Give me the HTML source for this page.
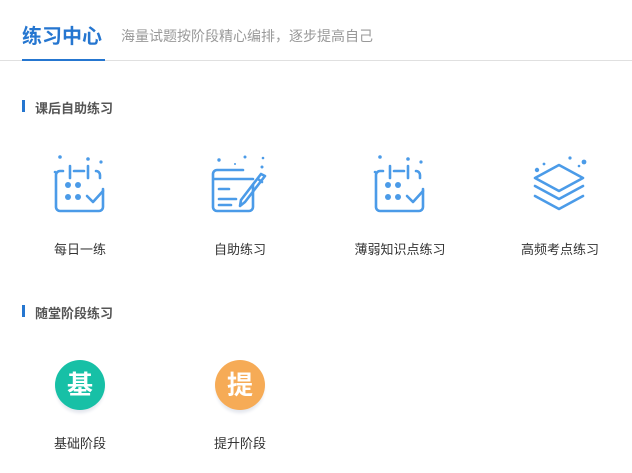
<!DOCTYPE html>
<html><head><meta charset="utf-8"><style>
body{margin:0;width:632px;height:473px;background:#fff;font-family:"Liberation Sans","Noto Sans CJK SC",sans-serif;position:relative;overflow:hidden}
.a{position:absolute;white-space:nowrap}
.lab{position:absolute;font-size:13px;color:#333;text-align:center;width:160px}
.c{position:absolute;width:50px;height:50px;border-radius:50%;color:#fff;font-size:26px;font-weight:bold;line-height:50px;text-align:center;box-shadow:0 4px 3px -1px #e4e7ee}
</style></head><body>
<div class="a" style="left:22px;top:20px;font-size:20px;font-weight:bold;color:#2576d0">练习中心</div>
<div class="a" style="left:121px;top:26px;font-size:14px;color:#999">海量试题按阶段精心编排，逐步提高自己</div>
<div class="a" style="left:0;top:60px;width:632px;height:1px;background:#e0e0e0"></div>
<div class="a" style="left:22px;top:59px;width:83px;height:2px;background:#2576d0"></div>

<div class="a" style="left:22px;top:100px;width:3px;height:12px;background:#2576d0"></div>
<div class="a" style="left:35px;top:98px;font-size:13px;font-weight:bold;color:#555">课后自助练习</div>
<div class="a" style="left:22px;top:305px;width:3px;height:12px;background:#2576d0"></div>
<div class="a" style="left:35px;top:303px;font-size:13px;font-weight:bold;color:#555">随堂阶段练习</div>

<svg class="a" style="left:0;top:0" width="632" height="473" fill="none" stroke="#4b9be8" stroke-width="2.6" stroke-linecap="round" stroke-linejoin="round">
<g id="cal">
<path d="M63 171h-3a4 4 0 0 0-4 4v32a4 4 0 0 0 4 4h39a4 4 0 0 0 4-4v-18M96 171a4 4 0 0 1 4 4v3"/>
<path d="M70 166v12M88 166v12M74 171h10"/>
<path d="M87 196l6 6l10-11"/>
<g fill="#4b9be8" stroke="none"><circle cx="68" cy="185" r="3"/><circle cx="78" cy="185" r="3"/><circle cx="68" cy="197" r="3"/><circle cx="78" cy="197" r="3"/>
<circle cx="60" cy="157" r="1.8"/><circle cx="88" cy="159" r="1.8"/><circle cx="101" cy="162" r="1.6"/><circle cx="55" cy="172" r="1.3"/></g>
</g>
<use href="#cal" x="320"/>
<g>
<path d="M253 185v22a4 4 0 0 1-4 4h-32a4 4 0 0 1-4-4v-33a4 4 0 0 1 4-4h26M213 179h40M219 189h10M219 199h17M219 205h12"/>
<path d="M265 176l-20 26l-5 4l1-6l20-26z M258 179l4 3"/>
<g fill="#4b9be8" stroke="none"><circle cx="219" cy="160" r="1.7"/><circle cx="245" cy="157" r="1.5"/><circle cx="263" cy="158" r="1.3"/><circle cx="262" cy="167" r="1.5"/><circle cx="235" cy="164" r="1"/></g>
</g>
<g>
<path d="M559 165l24 13l-24 13l-24-13z"/>
<path d="M535 186l24 13l24-13M535 196l24 13l24-13"/>
<g fill="#4b9be8" stroke="none"><circle cx="537" cy="170" r="2.2"/><circle cx="544" cy="164" r="1.4"/><circle cx="570" cy="158" r="1.6"/><circle cx="584" cy="162" r="2.4"/><circle cx="579" cy="166" r="1.3"/></g>
</g>
</svg>

<div class="lab" style="left:0;top:239px">每日一练</div>
<div class="lab" style="left:160px;top:239px">自助练习</div>
<div class="lab" style="left:320px;top:239px">薄弱知识点练习</div>
<div class="lab" style="left:480px;top:239px">高频考点练习</div>

<div class="c" style="left:55px;top:360px;background:#17c0a6">基</div>
<div class="c" style="left:215px;top:360px;background:#f6ab56">提</div>
<div class="lab" style="left:0;top:433px">基础阶段</div>
<div class="lab" style="left:160px;top:433px">提升阶段</div>
</body></html>
